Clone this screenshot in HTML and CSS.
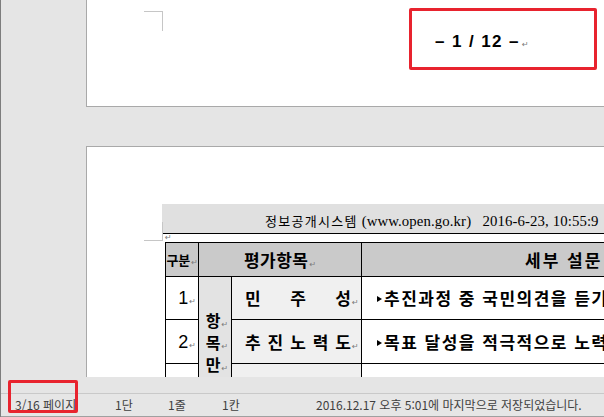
FILE: index.html
```html
<!DOCTYPE html>
<html lang="ko">
<head>
<meta charset="utf-8">
<title>문서 보기</title>
<link rel="stylesheet" href="styles.css">
</head>
<body>
<div class="app">
  <div class="view">
    <div class="page page-first">
      <div class="crop crop-tr"></div>
      <p class="pagenum">– 1 / 12 –<span class="ret">↵</span></p>
    </div>
    <div class="page page-second">
      <div class="crop crop-bl"></div>
      <div class="band"><span class="band-ko">정보공개시스템</span><span class="band-en"> (www.open.go.kr)   2016-6-23, 10:55:9</span></div>
      <div class="para-mark"><span class="ret">↵</span></div>
      <table class="survey">
        <colgroup><col class="c-no"><col class="c-cat"><col class="c-item"><col class="c-q"></colgroup>
        <thead>
          <tr class="r-head">
            <th class="h-no">구분<span class="ret">↵</span></th>
            <th class="h-item" colspan="2">평가항목<span class="ret">↵</span></th>
            <th class="h-q">세부 설문</th>
          </tr>
        </thead>
        <tbody>
          <tr class="r1">
            <td class="no">1<span class="ret">↵</span></td>
            <td class="cat" rowspan="3">
              <div class="vert">
                <span>항<span class="ret">↵</span></span>
                <span>목<span class="ret">↵</span></span>
                <span>만<span class="ret">↵</span></span>
              </div>
            </td>
            <td class="item"><span class="spread"><span>민</span><span>주</span><span>성</span></span><span class="ret">↵</span></td>
            <td class="q"><span class="tri"></span>추진과정 중 국민의견을 듣기</td>
          </tr>
          <tr class="r2">
            <td class="no">2<span class="ret">↵</span></td>
            <td class="item"><span class="spread"><span>추</span><span>진</span><span>노</span><span>력</span><span>도</span></span><span class="ret">↵</span></td>
            <td class="q"><span class="tri"></span>목표 달성을 적극적으로 노력</td>
          </tr>
          <tr class="r3">
            <td class="no"></td>
            <td class="item"></td>
            <td class="q"></td>
          </tr>
        </tbody>
      </table>
    </div>
  </div>
  <div class="hscroll"></div>
  <div class="status">
    <span class="st st-page">3/16 페이지</span>
    <span class="st st-col">1단</span>
    <span class="st st-line">1줄</span>
    <span class="st st-ch">1칸</span>
    <span class="st st-msg">2016.12.17 오후 5:01에 마지막으로 저장되었습니다.</span>
  </div>
  <div class="hl hl-page"></div>
  <div class="hl hl-status"></div>
</div>
</body>
</html>
```

FILE: styles.css
```css
html, body {
  margin: 0;
  padding: 0;
}
body {
  width: 604px;
  height: 417px;
  overflow: hidden;
  background: #e6e6e6;
  font-family: "Noto Sans CJK KR", sans-serif;
  color: #000;
}
.app {
  position: relative;
  height: 417px;
  display: flex;
  flex-direction: column;
  border-left: 1px solid #7d7d7d;
  box-sizing: border-box;
}
.view {
  flex: none;
  height: 377px;
  overflow: hidden;
  background: #e5e5e5;
}
.page {
  position: relative;
  margin-left: 85px;
  width: 700px;
  background: #fff;
  border-left: 1px solid #a9a9a9;
}
.page-first {
  height: 106px;
  border-bottom: 1px solid #a9a9a9;
}
.page-second {
  margin-top: 39px;
  height: 400px;
  box-sizing: border-box;
  border-top: 1px solid #a9a9a9;
  padding-top: 57px;
}
.crop {
  position: absolute;
  width: 18px;
  height: 18px;
  border: 0 solid #c6c6c6;
}
.crop-tr {
  left: 57px;
  top: 11px;
  height: 19px;
  border-top-width: 1px;
  border-right-width: 1px;
}
.crop-bl {
  left: 57px;
  top: 75px;
  border-bottom-width: 1px;
  border-right-width: 1px;
}
.ret {
  font-family: "DejaVu Sans", sans-serif;
  font-weight: normal;
  font-size: 8px;
  line-height: 0;
  color: #7a7a7a;
  letter-spacing: 0;
  margin-left: 1px;
}
.pagenum {
  margin: 0;
  padding: 32px 0 0 348px;
  font: bold 17px/20px "Liberation Sans", sans-serif;
  letter-spacing: 1.4px;
  white-space: pre;
}
.pagenum .ret {
  margin-left: 2px;
}
.band {
  margin-left: 75px;
  width: 540px;
  height: 29px;
  background: #e0e0e0;
  border-bottom: 1px solid #000;
  padding-left: 103px;
  line-height: 30px;
  white-space: pre;
  overflow: hidden;
  color: #000;
}
.band-ko {
  font-family: "Noto Sans CJK KR", serif;
  font-size: 13px;
  letter-spacing: 1.3px;
}
.band-en {
  font-family: "Liberation Serif", "Noto Sans CJK KR", serif;
  font-size: 14.8px;
  letter-spacing: 0.1px;
}
.para-mark {
  height: 8px;
  margin-left: 78px;
  font-size: 8px;
  line-height: 6px;
}
.para-mark .ret {
  margin-left: 0;
  line-height: 6px;
}
.survey {
  margin-left: 78px;
  border-collapse: collapse;
  table-layout: fixed;
  width: 560px;
}
.c-no { width: 33px; }
.c-cat { width: 33px; }
.c-item { width: 130px; }
.c-q { width: 364px; }
.survey th,
.survey td {
  border: 1px solid #000;
  padding: 0;
  white-space: nowrap;
  overflow: hidden;
}
.r-head { height: 34px; }
.r-head th {
  background: #cacaca;
  font-weight: bold;
  font-size: 17px;
  line-height: 20px;
}
.survey .h-no {
  font-size: 13px;
  text-align: right;
  padding-right: 0;
}
.survey .h-item {
  text-align: center;
  letter-spacing: 0.5px;
}
.survey .h-q {
  text-align: left;
  padding-left: 163px;
  letter-spacing: 2px;
}
.r1 { height: 43px; }
.r2 { height: 44px; }
.r3 { height: 90px; }
.survey .no {
  text-align: right;
  padding-right: 2px;
  font-family: "Liberation Sans", sans-serif;
  font-size: 18px;
  line-height: 20px;
  background: #fff;
}
.survey .cat {
  background: #e3e3e3;
  vertical-align: top;
  padding-top: 32px;
}
.vert {
  display: flex;
  flex-direction: column;
  align-items: center;
  font-weight: bold;
  font-size: 16px;
  line-height: 22px;
}
.vert > span {
  padding-left: 4px;
  height: 22px;
}
.item {
  background: #f0f0f0;
  font-weight: bold;
  font-size: 17px;
  line-height: 20px;
}
.survey .item {
  padding-left: 13px;
  padding-right: 1px;
}
.spread {
  display: inline-flex;
  justify-content: space-between;
  width: 106px;
  vertical-align: top;
}
.survey .q {
  padding-left: 15px;
  font-weight: bold;
  font-size: 17px;
  line-height: 20px;
  letter-spacing: 1.5px;
  background: #fff;
}
.tri {
  display: inline-block;
  width: 0;
  height: 0;
  border-top: 3.5px solid transparent;
  border-bottom: 3.5px solid transparent;
  border-left: 5px solid #000;
  margin-right: 2px;
  vertical-align: 3px;
}
.hscroll {
  flex: none;
  height: 16px;
  background: #e5e5e5;
}
.status {
  flex: 1;
  display: flex;
  align-items: center;
  background: #e6e6e6;
  border-top: 1px solid #c9c9c9;
  border-bottom: 1px solid #a0a0a0;
  padding-left: 14px;
  font-size: 12px;
  line-height: 16px;
  color: #3f3f3f;
  white-space: nowrap;
}
.st { flex: none; }
.st-page { width: 100px; }
.st-col { width: 53px; }
.st-line { width: 54px; }
.st-ch { width: 94px; }
.hl {
  position: absolute;
  box-sizing: border-box;
  border: 3px solid #e8232e;
  border-radius: 2px;
}
.hl-page {
  left: 408px;
  top: 8px;
  width: 188px;
  height: 62px;
}
.hl-status {
  left: 7px;
  top: 380px;
  width: 70px;
  height: 33px;
}
```
